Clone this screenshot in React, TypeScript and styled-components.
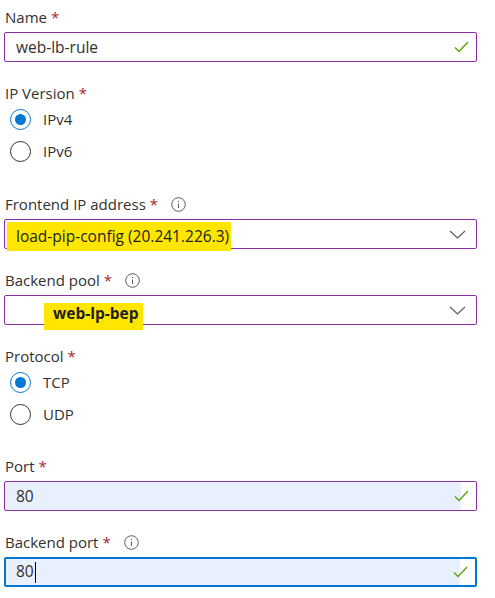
import React from 'react';
import styled, { createGlobalStyle } from 'styled-components';

const GlobalStyle = createGlobalStyle`
    body {
        margin: 0;
        background: #ffffff;
        font-family: "Segoe UI", "Open Sans", "Noto Sans", sans-serif;
        font-size: 15px;
        color: #323130;
    }
`

const Form = styled.div`
    display: flex;
    flex-direction: column;
    padding: 7px 0 0 4px;
    width: 473px;
`

const Field = styled.div<{ $after: number }>`
    display: flex;
    flex-direction: column;
    margin-bottom: ${p => p.$after}px;
`

const LabelRow = styled.div<{ $below: number }>`
    display: flex;
    align-items: center;
    height: 20px;
    line-height: 20px;
    padding-left: 1px;
    margin-bottom: ${p => p.$below}px;
`

const Star = styled.span`
    color: #a4262c;
    margin-left: 4px;
`

const InfoSlot = styled.span`
    display: inline-flex;
    margin-left: 13px;
`

const Box = styled.div<{ $focused?: boolean; $autofill?: boolean }>`
    box-sizing: border-box;
    display: flex;
    align-items: center;
    height: 30px;
    width: 473px;
    padding: 0 7px 0 ${p => (p.$focused ? 10 : 11)}px;
    border: ${p => (p.$focused ? '2px solid #0078d4' : '1px solid #8b2ea6')};
    border-radius: 2px;
    background: ${p => (p.$autofill
        ? 'linear-gradient(to right, #e8f0fe calc(100% - 15px), #ffffff 0)'
        : '#ffffff')};
`

const Value = styled.span`
    flex: 1;
    line-height: 20px;
    font-size: 15.5px;
    white-space: nowrap;
`

const Caret = styled.span`
    display: inline-block;
    width: 1px;
    height: 21px;
    margin-left: 1px;
    background: #000000;
    vertical-align: middle;
`

const SelectBox = styled.div`
    box-sizing: border-box;
    display: flex;
    align-items: flex-start;
    height: 30px;
    width: 473px;
    padding: 0 10px 0 11px;
    border: 1px solid #8b2ea6;
    border-radius: 2px;
    background: #ffffff;
`

const Highlight = styled.span<{ $top: number; $bottom: number; $indent: number; $bold?: boolean }>`
    display: inline-block;
    line-height: 20px;
    font-size: 15.5px;
    background: #ffe600;
    white-space: nowrap;
    margin-top: ${p => p.$top}px;
    margin-left: ${p => p.$indent - 9}px;
    padding: ${p => (p.$bottom === 7 ? 0 : 4)}px ${p => (p.$bold ? 4 : 2)}px ${p => p.$bottom}px 9px;
    font-weight: ${p => (p.$bold ? 700 : 400)};
    color: #201f1e;
`

const Spacer = styled.span`
    flex: 1;
`

const Chevron = styled.svg`
    align-self: center;
    flex-shrink: 0;
`

const RadioGroup = styled.div`
    display: flex;
    flex-direction: column;
`

const RadioRow = styled.label`
    display: flex;
    align-items: center;
    height: 32px;
    padding-left: 6px;
    gap: 12px;
    line-height: 20px;
`

const RadioCircle = styled.span<{ $checked?: boolean }>`
    box-sizing: border-box;
    display: inline-flex;
    align-items: center;
    justify-content: center;
    width: 21px;
    height: 21px;
    border-radius: 50%;
    border: 1px solid ${p => (p.$checked ? '#0078d4' : '#323130')};
    &::after {
        content: '';
        width: 11px;
        height: 11px;
        border-radius: 50%;
        background: ${p => (p.$checked ? '#0078d4' : 'transparent')};
    }
`

const Check = () => (
    <svg width="15" height="12" viewBox="0 0 15 12">
        <polyline points="1,6.5 5,10.5 14,1" fill="none" stroke="#57a300" strokeWidth="1.3" />
    </svg>
)

const Info = () => (
    <svg width="15" height="15" viewBox="0 0 15 15">
        <circle cx="7.5" cy="7.5" r="6.8" fill="none" stroke="#605e5c" strokeWidth="1" />
        <line x1="7.5" y1="6.5" x2="7.5" y2="11" stroke="#605e5c" strokeWidth="1" />
        <circle cx="7.5" cy="4.4" r="0.7" fill="#605e5c" />
    </svg>
)

const Label = ({ text, info, below = 5 }: { text: string; info?: boolean; below?: number }) => (
    <LabelRow $below={below}>
        {text}
        <Star>*</Star>
        {info && <InfoSlot><Info /></InfoSlot>}
    </LabelRow>
)

const Radios = ({ options, checked }: { options: string[]; checked: string }) => (
    <RadioGroup>
        {options.map(o => (
            <RadioRow key={o}>
                <RadioCircle $checked={o === checked} />
                {o}
            </RadioRow>
        ))}
    </RadioGroup>
)

const App = () => {
    return (
        <Form>
            <GlobalStyle />
            <Field $after={21}>
                <Label text="Name" />
                <Box>
                    <Value>web-lb-rule</Value>
                    <Check />
                </Box>
            </Field>

            <Field $after={27}>
                <Label text="IP Version" below={0} />
                <Radios options={['IPv4', 'IPv6']} checked="IPv4" />
            </Field>

            <Field $after={21}>
                <Label text="Frontend IP address" info />
                <SelectBox>
                    <Highlight $top={2} $bottom={5} $indent={0}>load-pip-config (20.241.226.3)</Highlight>
                    <Spacer />
                    <Chevron width="17" height="9" viewBox="0 0 17 9">
                        <polyline points="1,1 8.5,8 16,1" fill="none" stroke="#605e5c" strokeWidth="1.2" />
                    </Chevron>
                </SelectBox>
            </Field>

            <Field $after={21}>
                <Label text="Backend pool" info />
                <SelectBox>
                    <Highlight $top={7} $bottom={7} $indent={37} $bold>web-lp-bep</Highlight>
                    <Spacer />
                    <Chevron width="17" height="9" viewBox="0 0 17 9">
                        <polyline points="1,1 8.5,8 16,1" fill="none" stroke="#605e5c" strokeWidth="1.2" />
                    </Chevron>
                </SelectBox>
            </Field>

            <Field $after={26}>
                <Label text="Protocol" below={0} />
                <Radios options={['TCP', 'UDP']} checked="TCP" />
            </Field>

            <Field $after={21}>
                <Label text="Port" />
                <Box $autofill>
                    <Value>80</Value>
                    <Check />
                </Box>
            </Field>

            <Field $after={0}>
                <Label text="Backend port" info />
                <Box $autofill $focused>
                    <Value>80<Caret /></Value>
                    <Check />
                </Box>
            </Field>
        </Form>
    );
};

export default App;
